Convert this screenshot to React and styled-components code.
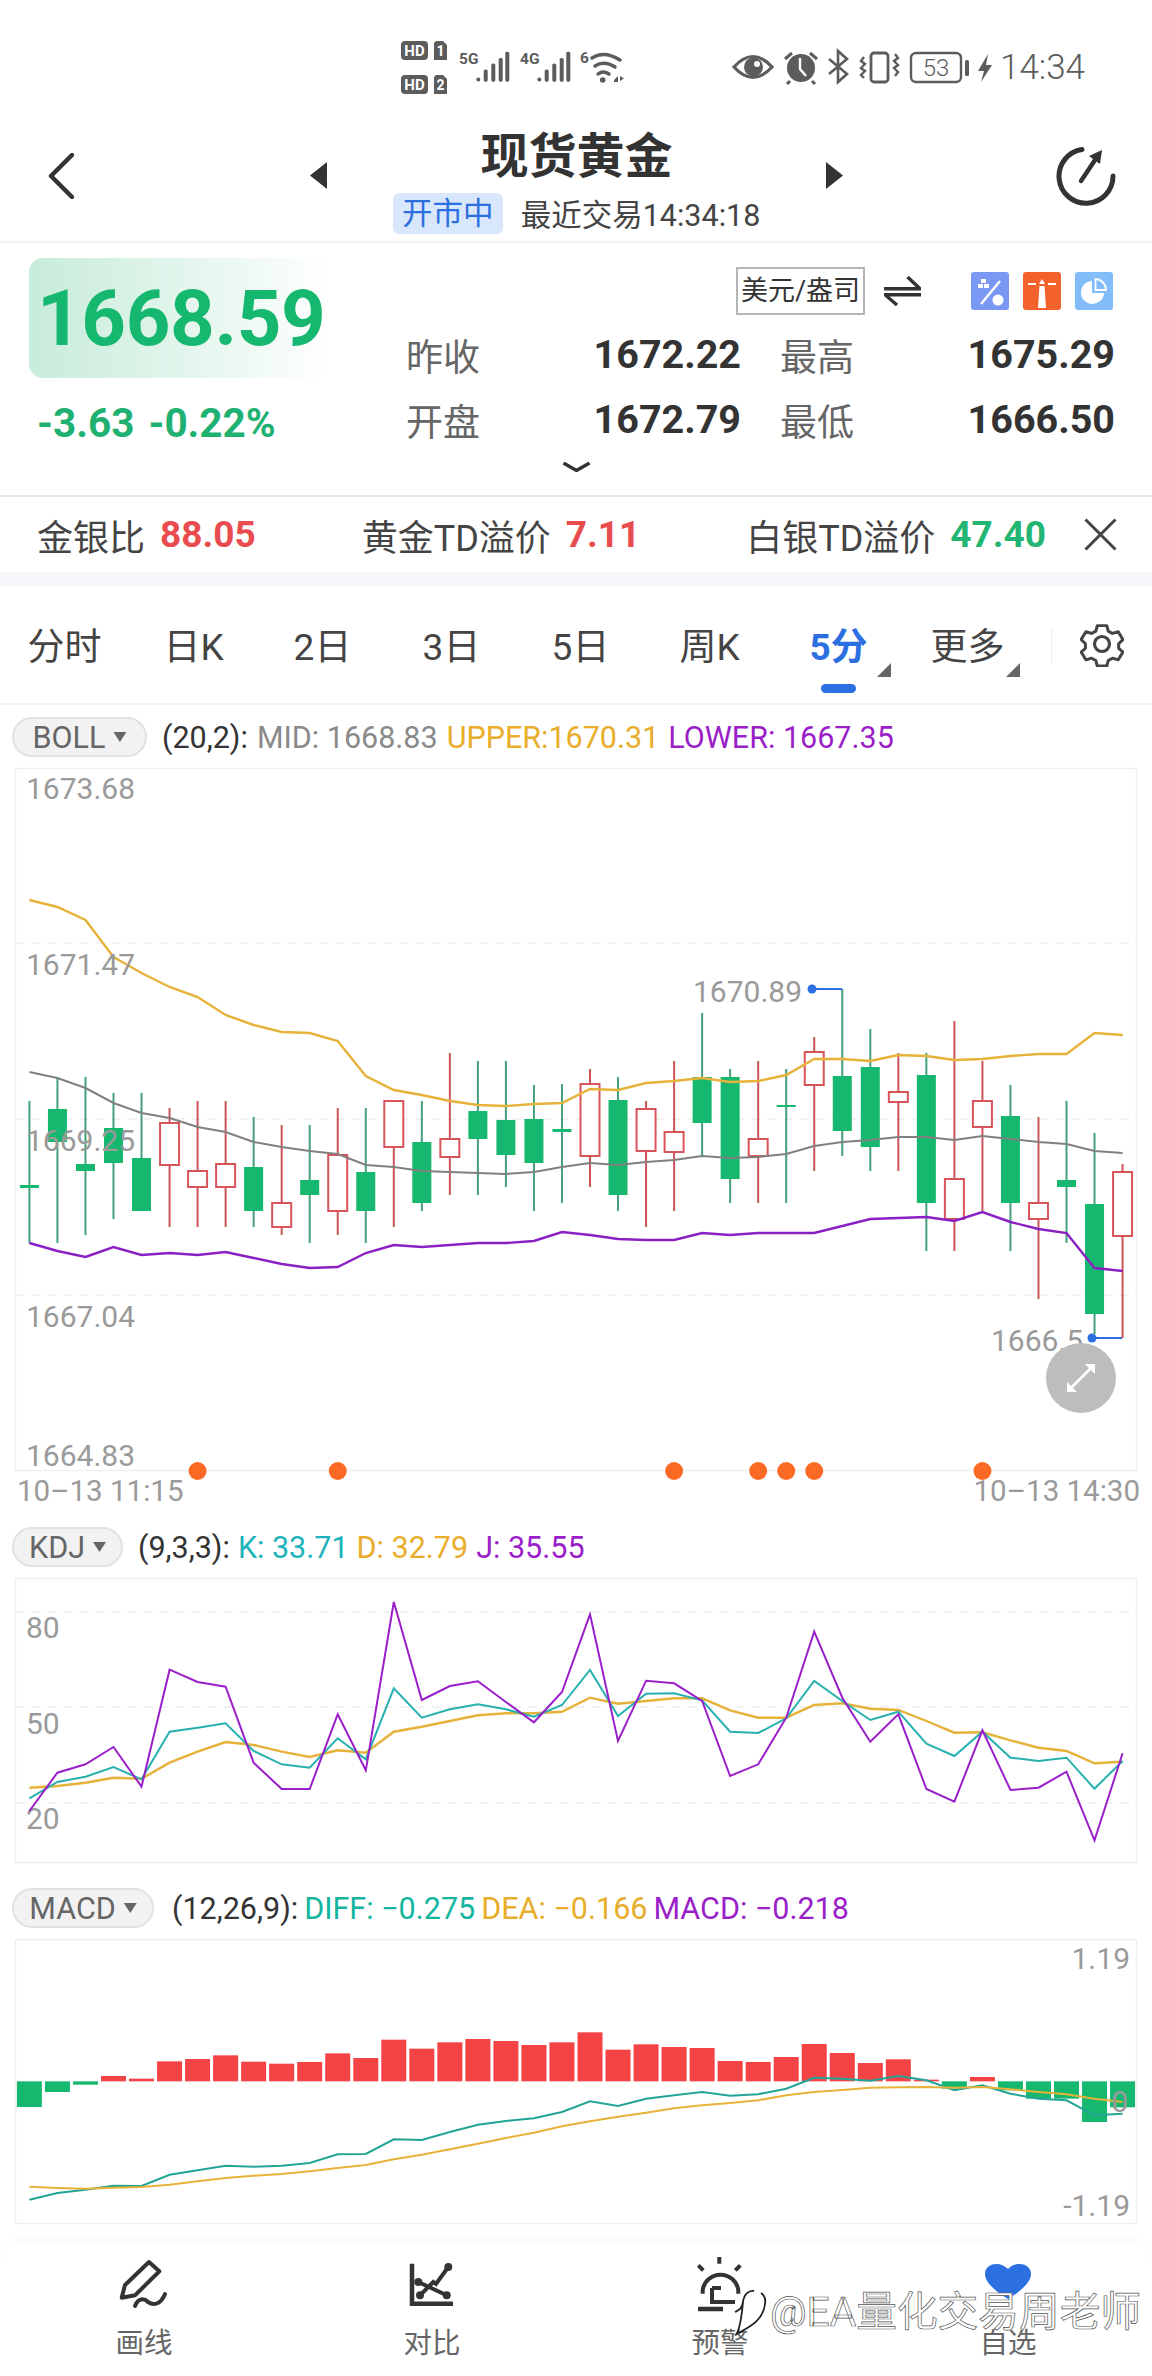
import React from "react";
import styled, { createGlobalStyle } from "styled-components";

const FONT = `Roboto, "Noto Sans CJK SC", sans-serif`;
const GREEN = "#16b86f";
const RED = "#e94c4f";
const BLUE = "#2c6fe0";

const GlobalStyle = createGlobalStyle`
  html, body { margin: 0; padding: 0; background: #fff; }
  body { font-family: ${FONT}; color: #333; }
`;

// candle x in page pixels, all chart data below is read off in page pixels
const cx = (i) => 29.4 + 28.03 * i;

// [up, high, low, bodyTop, bodyBottom]
const candles = [
  [0, 1101, 1243, 1185, 1188], [0, 1077, 1243, 1109, 1142], [0, 1077, 1235, 1164, 1171], [0, 1093, 1219, 1128, 1163],
  [0, 1093, 1211, 1158, 1211], [1, 1108, 1227, 1123, 1165], [1, 1101, 1227, 1171, 1187], [1, 1101, 1227, 1164, 1187],
  [0, 1117, 1227, 1167, 1211], [1, 1125, 1235, 1203, 1227], [0, 1125, 1243, 1180, 1195], [1, 1108, 1235, 1155, 1211],
  [0, 1108, 1243, 1172, 1211], [1, 1101, 1227, 1101, 1147], [0, 1101, 1211, 1142, 1203], [1, 1053, 1195, 1139, 1157],
  [0, 1061, 1195, 1111, 1139], [0, 1061, 1187, 1120, 1155], [0, 1085, 1211, 1119, 1163], [0, 1084, 1203, 1129, 1132],
  [1, 1069, 1187, 1084, 1156], [0, 1077, 1211, 1100, 1195], [1, 1101, 1227, 1109, 1151], [1, 1061, 1211, 1132, 1152],
  [0, 1013, 1156, 1077, 1123], [0, 1069, 1203, 1077, 1179], [1, 1061, 1203, 1139, 1156], [0, 1069, 1203, 1105, 1107],
  [1, 1037, 1171, 1052, 1085], [0, 989, 1156, 1076, 1131], [0, 1029, 1171, 1067, 1147], [1, 1053, 1171, 1092, 1102],
  [0, 1053, 1251, 1075, 1203], [1, 1021, 1251, 1179, 1219], [1, 1061, 1211, 1101, 1127], [0, 1085, 1251, 1116, 1203],
  [1, 1117, 1299, 1203, 1219], [0, 1101, 1243, 1180, 1187], [0, 1133, 1334, 1204, 1314], [1, 1164, 1338, 1172, 1236],
];

const bollUpper = [900, 907, 920, 957, 973, 987, 997, 1015, 1025, 1032, 1033, 1041, 1076, 1090, 1095, 1101, 1105, 1106, 1104, 1103,
  1089, 1090, 1083, 1081, 1078, 1082, 1081, 1075, 1059, 1059, 1061, 1055, 1056, 1060, 1059, 1056, 1054, 1054, 1033, 1035];
const bollMid = [1072, 1078, 1088, 1103, 1113, 1118, 1127, 1132, 1142, 1147, 1151, 1154, 1165, 1167, 1171, 1172, 1173, 1174, 1172, 1167,
  1163, 1165, 1162, 1160, 1156, 1158, 1157, 1154, 1146, 1142, 1140, 1137, 1137, 1140, 1136, 1139, 1142, 1144, 1151, 1153];
const bollLower = [1243, 1251, 1257, 1247, 1255, 1253, 1255, 1252, 1258, 1264, 1268, 1267, 1253, 1245, 1247, 1245, 1243, 1243, 1241, 1232,
  1235, 1239, 1240, 1240, 1233, 1235, 1233, 1233, 1233, 1226, 1219, 1218, 1217, 1221, 1212, 1222, 1229, 1233, 1268, 1271];
const orangeDots = [6, 11, 23, 26, 27, 28, 34];

const kdjJ = [870, 755, 730, 678, 797, 446, 483, 497, 725, 804, 804, 580, 748, 243, 537, 495, 481, 543, 604, 513,
  280, 660, 479, 487, 540, 765, 730, 590, 332, 530, 662, 580, 804, 842, 628, 807, 800, 752, 958, 697];
const kdjK = [832, 783, 767, 738, 775, 632, 620, 607, 690, 730, 740, 652, 715, 502, 590, 565, 550, 565, 587, 552,
  447, 585, 518, 517, 538, 632, 636, 592, 480, 540, 597, 572, 668, 705, 632, 710, 720, 710, 803, 720];
const kdjD = [800, 795, 785, 770, 773, 725, 692, 663, 672, 692, 708, 688, 695, 632, 617, 600, 583, 577, 577, 572,
  530, 548, 540, 532, 532, 568, 590, 590, 552, 547, 563, 567, 600, 635, 634, 658, 680, 690, 727, 722];

// bar tops, everything else hangs on the zero line at 598
const macdBars = [675, 630, 608, 582, 590, 538, 531, 520, 539, 545, 540, 514, 528, 473, 500, 481, 471, 477, 489, 481,
  451, 503, 487, 495, 498, 537, 540, 525, 486, 513, 543, 532, 593, 620, 585, 625, 650, 650, 720, 676];
const macdDiff = [953, 933, 923, 911, 912, 878, 865, 851, 854, 851, 843, 817, 816, 772, 774, 750, 728, 717, 709, 690,
  658, 672, 650, 640, 630, 641, 637, 620, 587, 590, 596, 582, 595, 625, 610, 635, 650, 655, 700, 695];
const macdDea = [914, 918, 920, 917, 915, 908, 898, 888, 881, 876, 868, 858, 849, 832, 818, 802, 785, 768, 752, 733,
  718, 704, 692, 679, 670, 663, 655, 640, 630, 624, 617, 616, 615, 617, 615, 622, 630, 637, 650, 660];

const kdjY = (z) => 1520 + z / 3;
const macdY = (z) => 1880 + z / 3;
const toPoints = (arr, fy = (v) => v) => arr.map((v, i) => `${cx(i).toFixed(1)},${fy(v).toFixed(1)}`).join(" ");

const Page = styled.div`
  width: 1152px;
  height: 2376px;
  overflow: hidden;
  background: #fff;
`;

const StatusBar = styled.div`
  height: 120px;
  box-sizing: border-box;
  padding: 15px 0 0 390px;
  display: flex;
  align-items: center;
  color: #5c5c5c;
`;

const StatusTime = styled.span`
  margin-left: 5px;
  font-size: 35px;
  font-weight: 300;
`;

const StatusRight = styled.svg`
  margin-left: 85px;
`;

const Nav = styled.div`
  height: 123px;
  box-sizing: border-box;
  padding: 7px 35px 0 48px;
  display: flex;
  align-items: flex-start;
  border-bottom: 2px solid #f3f3f3;
`;

const BackIcon = styled.svg`
  margin-top: 26px;
`;

const NavCenter = styled.div`
  margin-left: 236px;
  width: 533px;
  display: grid;
  grid-template-columns: 17px 1fr 17px;
`;

const NavArrow = styled.svg`
  margin-top: 35px;
`;

const NavMid = styled.div`
  display: flex;
  flex-direction: column;
  align-items: center;
`;

const Title = styled.div`
  font-size: 48px;
  line-height: 60px;
  font-weight: 700;
  color: #333;
`;

const SubLine = styled.div`
  margin-top: 4px;
  display: flex;
  align-items: center;
  font-size: 30.5px;
  color: #444;
  gap: 18px;
`;

const OpenTag = styled.span`
  width: 110px;
  height: 41px;
  line-height: 41px;
  text-align: center;
  border-radius: 6px;
  background: #d8e7fb;
  color: ${BLUE};
`;

const RefreshIcon = styled.svg`
  margin-left: auto;
  margin-top: 19px;
`;

const Quote = styled.div`
  display: flex;
  padding: 15px 37px 0 29px;
`;

const QuoteLeft = styled.div`
  width: 301px;
`;

const PriceBox = styled.div`
  height: 120px;
  padding-left: 8px;
  border-radius: 14px 0 0 14px;
  background: linear-gradient(90deg, #c8ecda 0%, #e2f5ec 50%, #ffffff 100%);
  display: flex;
  align-items: center;
  font-size: 78px;
  font-weight: 700;
  color: ${GREEN};
  letter-spacing: -0.4px;
`;

const ChangeLine = styled.div`
  margin: 23px 0 0 8px;
  font-size: 40.5px;
  line-height: 44px;
  font-weight: 700;
  color: #1fb172;
  display: flex;
  gap: 14px;
  white-space: nowrap;
`;

const QuoteRight = styled.div`
  margin-left: 76px;
  width: 709px;
`;

const ToolRow = styled.div`
  margin-top: 9px;
  height: 48px;
  display: flex;
  align-items: center;
  justify-content: flex-end;
`;

const UnitBox = styled.div`
  width: 129px;
  height: 48px;
  box-sizing: border-box;
  border: 2px solid #b5b5b5;
  font-size: 27px;
  line-height: 44px;
  text-align: center;
  color: #333;
  white-space: nowrap;
`;

const SwapIcon = styled.svg`
  margin-left: 19px;
`;

const ToolIcons = styled.div`
  margin-left: 50px;
  margin-right: 2px;
  display: flex;
  gap: 14px;
`;

const Stats = styled.div`
  margin-top: 7px;
  display: grid;
  grid-auto-rows: 65px;
  align-items: center;
  width: 709px;
  grid-template-columns: 75px 260px 39px 75px 260px;
`;

const StatLabel = styled.span`
  font-size: 37px;
  color: #666;
  white-space: nowrap;
`;

const StatValue = styled.span`
  font-size: 39.5px;
  font-weight: 700;
  color: #333;
  text-align: right;
`;

const ExpandRow = styled.div`
  display: flex;
  justify-content: center;
  padding: 10px 0 23px;
  border-bottom: 2px solid #e8e8e8;
  svg { display: block; }
`;

const Ticker = styled.div`
  height: 75px;
  box-sizing: border-box;
  padding: 0 35px 0 37px;
  display: flex;
  align-items: center;
`;

const TickerGroup = styled.div`
  display: flex;
  align-items: center;
  gap: 106px;
`;

const TickerItem = styled.div`
  display: flex;
  align-items: center;
  gap: 15px;
  font-size: 36px;
  color: #444;
  white-space: nowrap;
`;

const TickerValue = styled.span`
  font-size: 37px;
  font-weight: 700;
  color: ${(p) => p.$color};
`;

const CloseIcon = styled.svg`
  margin-left: auto;
  flex-shrink: 0;
`;

const Band = styled.div`
  height: 14px;
  background: #f5f6fa;
`;

const Tabs = styled.div`
  height: 119px;
  box-sizing: border-box;
  border-bottom: 2px solid #f3f3f3;
  display: flex;
  align-items: stretch;
`;

const Tab = styled.div`
  position: relative;
  width: 129px;
  box-sizing: border-box;
  padding-top: 34px;
  text-align: center;
  font-size: 37px;
  line-height: 56px;
  font-weight: ${(p) => (p.$active ? 700 : 400)};
  color: ${(p) => (p.$active ? BLUE : "#444")};
  &::after {
    display: ${(p) => (p.$active ? "block" : "none")};
    content: "";
    position: absolute;
    left: 47px;
    top: 98px;
    width: 35px;
    height: 9px;
    border-radius: 5px;
    background: ${BLUE};
  }
`;

const Corner = styled.span`
  position: absolute;
  left: 103px;
  top: 77px;
  width: 14px;
  height: 14px;
  background: #666;
  clip-path: polygon(100% 0, 100% 100%, 0 100%);
`;

const TabDivider = styled.div`
  margin: 41px 0 0 19px;
  width: 1px;
  height: 36px;
  background: #eee;
`;

const GearWrap = styled.div`
  margin: 35px 0 0 28px;
  color: #444;
`;

const IndicatorRow = styled.div`
  margin-top: ${(p) => p.$top}px;
  padding: 0 0 11px 12px;
  display: flex;
  align-items: center;
  font-size: 30.5px;
  white-space: nowrap;
`;

const Pill = styled.div`
  width: ${(p) => p.$w}px;
  height: 40px;
  box-sizing: border-box;
  border: 2px solid #e2e2e2;
  border-radius: 20px;
  background: #f2f2f2;
  color: #666;
  display: flex;
  align-items: center;
  justify-content: center;
  gap: 8px;
  font-size: 30.5px;
`;

const PillCaret = styled.span`
  width: 13px;
  height: 10px;
  background: #666;
  clip-path: polygon(0 0, 100% 0, 50% 100%);
`;

const Params = styled.div`
  margin-left: ${(p) => p.$gap}px;
  display: flex;
  gap: ${(p) => p.$spread}px;
`;

const Tone = styled.span`
  color: ${(p) => p.$c};
`;

const Panel = styled.div`
  margin: 0 15px;
  width: 1122px;
  height: ${(p) => p.$h}px;
  box-sizing: border-box;
  svg { display: block; overflow: visible; }
`;

const AxisText = styled.text`
  font-family: ${FONT};
  font-size: 30px;
  fill: #9a9a9a;
`;

const XLabels = styled.div`
  height: 39px;
  padding: 0 12px 0 17px;
  display: flex;
  align-items: center;
  justify-content: space-between;
  font-size: 29.5px;
  color: #9a9a9a;
`;

const Footer = styled.div`
  position: relative;
  margin-top: 18px;
  height: 136px;
  box-sizing: border-box;
  padding-top: 12px;
  border-radius: 24px 24px 0 0;
  box-shadow: 0 -2px 10px rgba(0, 0, 0, 0.035);
  display: grid;
  grid-template-columns: repeat(4, 288px);
`;

const FootItem = styled.div`
  display: flex;
  flex-direction: column;
  align-items: center;
  font-size: 28.5px;
  line-height: 32px;
  color: #666;
  svg { display: block; margin-bottom: 14px; }
`;

const Watermark = styled.div`
  position: absolute;
  left: 733px;
  top: 46px;
  display: flex;
  align-items: flex-start;
  gap: 3px;
  font-size: 40.7px;
  line-height: 48px;
  color: #fff;
  -webkit-text-stroke: 0.7px #555;
  white-space: nowrap;
`;

const Signal = ({ x }) => (
  <g fill="#5c5c5c">
    <circle cx={x + 2} cy={49.6} r={2} />
    {[[7.4, 39.5], [15, 33.5], [22.4, 28], [29, 21.7]].map(([dx, top]) => (
      <rect key={dx} x={x + dx} y={top} width={4} height={51.7 - top} rx={1.6} />
    ))}
  </g>
);

const HdBadge = ({ y, n }) => (
  <g>
    <rect x="11" y={y} width="27" height="19" rx="4" fill="#5c5c5c" />
    <text x="24.5" y={y + 15} textAnchor="middle" fontSize="15" fontWeight="700" fill="#fff" fontFamily={FONT}>HD</text>
    <path d={`M46 ${y}h7l4 4v15h-13v-17z`} fill="#5c5c5c" />
    <text x="50.5" y={y + 15} textAnchor="middle" fontSize="14" fontWeight="700" fill="#fff" fontFamily={FONT}>{n}</text>
  </g>
);

const StatusLeft = () => (
  <svg width="250" height="75" viewBox="0 0 250 75">
    <HdBadge y={11} n="1" />
    <HdBadge y={45} n="2" />
    <text x="69" y="34" fontSize="15.500" fontWeight="700" fill="#5c5c5c" fontFamily={FONT}>5G</text>
    <Signal x={86.3} />
    <text x="130" y="34" fontSize="15.500" fontWeight="700" fill="#5c5c5c" fontFamily={FONT}>4G</text>
    <Signal x={147.3} />
    <text x="190" y="33" fontSize="15.500" fontWeight="700" fill="#5c5c5c" fontFamily={FONT}>6</text>
    <g fill="none" stroke="#5c5c5c" strokeWidth="3.4" strokeLinecap="round">
      <path d="M202 28 Q214 20 230 30" />
      <path d="M205 36 Q214 30 225 37" />
      <path d="M208 44 Q213 40 219 44" />
    </g>
    <circle cx="212.7" cy="50" r="2.8" fill="#5c5c5c" />
    <path d="M224 50l4-4v6h-4zM230 46l4 2.5-4 2.5z" fill="#5c5c5c" />
  </svg>
);

const StatusIcons = () => (
  <StatusRight width="270" height="55" viewBox="0 0 270 55">
    <path d="M9 27 Q28 6 47 27 Q28 48 9 27Z" fill="none" stroke="#5c5c5c" strokeWidth="3.2" />
    <circle cx="28.5" cy="27" r="9.5" fill="#5c5c5c" />
    <circle cx="32" cy="24" r="3" fill="#fff" />
    <circle cx="76" cy="28" r="14" fill="#5c5c5c" />
    <path d="M75 18v11l6 7" fill="none" stroke="#fff" strokeWidth="2.4" />
    <path d="M60 19l7-6M85 13l7 6M65 41l-3 3M87 41l3 3" stroke="#5c5c5c" strokeWidth="3" />
    <path d="M104 19 L122 34 L113 42 V11 L122 19 L104 34" fill="none" stroke="#5c5c5c" strokeWidth="2.6" />
    <rect x="146" y="13" width="17" height="29" rx="3" fill="none" stroke="#5c5c5c" strokeWidth="2.8" />
    <path d="M139 17 l-3 4 4 3 -4 4 4 3 -4 4 3 3M170 14 l3 4 -4 3 4 4 -4 3 4 4 -3 4" fill="none" stroke="#5c5c5c" strokeWidth="2.4" />
    <rect x="186" y="13" width="50" height="29" rx="5" fill="none" stroke="#5c5c5c" strokeWidth="2.4" />
    <text x="211" y="36" textAnchor="middle" fontSize="24" fontWeight="300" fill="#5c5c5c" fontFamily={FONT}>53</text>
    <rect x="240" y="20" width="4" height="16" rx="1.5" fill="#5c5c5c" />
    <path d="M263 14 L253 31 H259 L256 42 L267 25 H261 Z" fill="#5c5c5c" />
  </StatusRight>
);

const ToolBlue = () => (
  <svg width="38" height="38" viewBox="0 0 38 38">
    <rect width="38" height="38" rx="3" fill="#7b97f4" />
    <path d="M10 32 L29 9" stroke="#fff" strokeWidth="2.4" />
    <circle cx="27" cy="28" r="5.5" fill="#fff" />
    <path d="M10 7h5v4h-5zM7 12h5v4h-5zM13 12h5v4h-5z" fill="#fff" />
  </svg>
);

const ToolOrange = () => (
  <svg width="38" height="38" viewBox="0 0 38 38">
    <rect width="38" height="38" rx="3" fill="#f2622a" />
    <path d="M15 36 L16.5 14 H21.5 L23 36Z M16 12 L19 7 L22 12Z" fill="#fff" />
    <path d="M5 12h8M25 12h8" stroke="#fff" strokeWidth="2" />
  </svg>
);

const ToolPie = () => (
  <svg width="38" height="38" viewBox="0 0 38 38">
    <rect width="38" height="38" rx="3" fill="#82bdf9" />
    <path d="M17 9 A11.5 11.5 0 1 0 29 21 H17 Z" fill="#fff" />
    <path d="M20.5 7 A11 11 0 0 1 31 18 H20.5 Z" fill="none" stroke="#fff" strokeWidth="1.8" />
  </svg>
);

const Gear = () => (
  <svg width="44" height="46" viewBox="0 0 44 46" fill="none" stroke="currentColor" strokeWidth="3.2" strokeLinejoin="round">
    <path d="M17 3h10l1.5 6 4.5 2.5 6-1.800 5 8.500-4.500 4.500v0 5l4.500 4-5 8.500-6-1.800-4.500 2.600-1.500 6h-10l-1.500-6-4.500-2.600-6 1.800-5-8.500 4.500-4v-5l-4.500-4.500 5-8.500 6 1.800 4.500-2.500z" transform="translate(0 0) scale(0.95 0.92) translate(1.200 2)" />
    <circle cx="22" cy="23" r="7.500" />
  </svg>
);

const Candle = ({ i, data }) => {
  const [up, hi, lo, top, bot] = data;
  const x = cx(i);
  if (up) {
    return (
      <g>
        <line x1={x} x2={x} y1={hi} y2={lo} stroke="#cc555c" strokeWidth="2" />
        <rect x={x - 9.5} y={top} width={19} height={bot - top} fill="#fff" stroke="#d9545a" strokeWidth="2" />
      </g>
    );
  }
  return (
    <g>
      <line x1={x} x2={x} y1={hi} y2={lo} stroke="#43a07c" strokeWidth="2" />
      <rect x={x - 9.5} y={top} width={19} height={bot - top} fill={GREEN} />
    </g>
  );
};

const PanelFrame = ({ x = 15, y, h }) => (
  <rect x={x + 0.5} y={y + 0.5} width={1121} height={h - 1} fill="none" stroke="#f0f0f0" strokeWidth="1.5" />
);

const GridLine = ({ y }) => (
  <line x1="16" x2="1136" y1={y} y2={y} stroke="#eeeeee" strokeWidth="1.5" strokeDasharray="9 7" />
);

const BollChart = () => (
  <svg width="1122" height="703" viewBox="15 768 1122 703">
    <PanelFrame y={768} h={703} />
    {[943, 1119, 1295].map((y) => <GridLine key={y} y={y} />)}
    {candles.map((c, i) => <Candle key={i} i={i} data={c} />)}
    <polyline points={toPoints(bollUpper)} fill="none" stroke="#e6b23a" strokeWidth="2.4" />
    <polyline points={toPoints(bollMid)} fill="none" stroke="#808080" strokeWidth="2" />
    <polyline points={toPoints(bollLower)} fill="none" stroke="#8a1fc4" strokeWidth="2.4" />
    <AxisText x="26" y="799">1673.68</AxisText>
    <AxisText x="26" y="975">1671.47</AxisText>
    <AxisText x="26" y="1151">1669.25</AxisText>
    <AxisText x="26" y="1327">1667.04</AxisText>
    <AxisText x="26" y="1466">1664.83</AxisText>
    <AxisText x="693" y="1002">1670.89</AxisText>
    <path d="M812 989 H842" stroke={BLUE} strokeWidth="2" fill="none" />
    <circle cx="812" cy="989" r="4.500" fill={BLUE} />
    <AxisText x="991" y="1351">1666.5</AxisText>
    <path d="M1092 1338 H1122" stroke={BLUE} strokeWidth="2" fill="none" />
    <circle cx="1092" cy="1338" r="4.500" fill={BLUE} />
    {orangeDots.map((i) => <circle key={i} cx={cx(i)} cy="1471" r="9" fill="#fb6a25" />)}
    <circle cx="1081" cy="1378" r="35" fill="#bdbdbd" />
    <path d="M1069 1390 L1093 1366" stroke="#fff" strokeWidth="2.600" />
    <path d="M1085 1364 H1095 V1374 Z M1067 1382 V1392 H1077 Z" fill="#fff" />
  </svg>
);

const KdjChart = () => (
  <svg width="1122" height="285" viewBox="15 1577 1122 285">
    <PanelFrame y={1577} h={285} />
    {[1611, 1706, 1802].map((y) => <GridLine key={y} y={y} />)}
    <AxisText x="26" y="1637">80</AxisText>
    <AxisText x="26" y="1733">50</AxisText>
    <AxisText x="26" y="1828">20</AxisText>
    <polyline points={toPoints(kdjD, kdjY)} fill="none" stroke="#e6b23a" strokeWidth="2.400" />
    <polyline points={toPoints(kdjK, kdjY)} fill="none" stroke="#28b0b0" strokeWidth="2" />
    <polyline points={toPoints(kdjJ, kdjY)} fill="none" stroke="#9a1fc9" strokeWidth="2" />
  </svg>
);

const MacdChart = () => (
  <svg width="1122" height="285" viewBox="15 1937 1122 285">
    <PanelFrame y={1937} h={285} />
    {macdBars.map((z, i) => {
      const up = z < 598;
      const a = macdY(Math.min(z, 598));
      const b = macdY(Math.max(z, 598));
      return <rect key={i} x={cx(i) - 12.500} y={a} width={25} height={b - a} fill={up ? "#f44345" : GREEN} />;
    })}
    <polyline points={toPoints(macdDiff, macdY)} fill="none" stroke="#22a596" strokeWidth="2" />
    <polyline points={toPoints(macdDea, macdY)} fill="none" stroke="#e6b23a" strokeWidth="2" />
    <AxisText x="1130" y="1967" textAnchor="end">1.19</AxisText>
    <AxisText x="1128" y="2110" textAnchor="end">0</AxisText>
    <AxisText x="1130" y="2214" textAnchor="end">-1.19</AxisText>
  </svg>
);

const statRows = [
  ["昨收", "1672.22", "最高", "1675.29"],
  ["开盘", "1672.79", "最低", "1666.50"],
];

const tabs = ["分时", "日K", "2日", "3日", "5日", "周K", "5分", "更多"];

const App = () => (
  <Page>
    <GlobalStyle />
    <StatusBar>
      <StatusLeft />
      <StatusIcons />
      <StatusTime>14:34</StatusTime>
    </StatusBar>

    <Nav>
      <BackIcon width="26" height="46" viewBox="0 0 26 46">
        <path d="M24 2 L3 23 L24 44" fill="none" stroke="#333" strokeWidth="4.500" strokeLinecap="round" strokeLinejoin="round" />
      </BackIcon>
      <NavCenter>
        <NavArrow width="17" height="27" viewBox="0 0 17 27"><path d="M17 0 V27 L0 13.500Z" fill="#333" /></NavArrow>
        <NavMid>
          <Title>现货黄金</Title>
          <SubLine>
            <OpenTag>开市中</OpenTag>
            <span>最近交易14:34:18</span>
          </SubLine>
        </NavMid>
        <NavArrow width="17" height="27" viewBox="0 0 17 27"><path d="M0 0 V27 L17 13.500Z" fill="#333" /></NavArrow>
      </NavCenter>
      <RefreshIcon width="61" height="60" viewBox="0 0 61 60">
        <path d="M26 3.500 A27 27 0 1 0 57 30" fill="none" stroke="#333" strokeWidth="5" strokeLinecap="round" />
        <path d="M25 35 L39 14" stroke="#333" strokeWidth="4.500" strokeLinecap="round" />
        <path d="M46 4 L33 10 L44 18Z" fill="#333" />
      </RefreshIcon>
    </Nav>

    <Quote>
      <QuoteLeft>
        <PriceBox>1668.59</PriceBox>
        <ChangeLine>
          <span>-3.63</span>
          <span>-0.22%</span>
        </ChangeLine>
      </QuoteLeft>
      <QuoteRight>
        <ToolRow>
          <UnitBox>美元/盎司</UnitBox>
          <SwapIcon width="37" height="30" viewBox="0 0 37 30">
            <path d="M0 12.700 H36 L23.500 1 M37 18.700 H1 L13 29" fill="none" stroke="#333" strokeWidth="3.400" />
          </SwapIcon>
          <ToolIcons>
            <ToolBlue />
            <ToolOrange />
            <ToolPie />
          </ToolIcons>
        </ToolRow>
        <Stats>
          {statRows.map(([a, b, c, d]) => (
            <React.Fragment key={a}>
              <StatLabel>{a}</StatLabel>
              <StatValue>{b}</StatValue>
              <span />
              <StatLabel>{c}</StatLabel>
              <StatValue>{d}</StatValue>
            </React.Fragment>
          ))}
        </Stats>
      </QuoteRight>
    </Quote>
    <ExpandRow>
      <svg width="29" height="10" viewBox="0 0 29 10">
        <path d="M1.500 1 L14.500 8.500 L27.500 1" fill="none" stroke="#333" strokeWidth="3.400" />
      </svg>
    </ExpandRow>

    <Ticker>
      <TickerGroup>
        <TickerItem>金银比<TickerValue $color={RED}>88.05</TickerValue></TickerItem>
        <TickerItem>黄金TD溢价<TickerValue $color={RED}>7.11</TickerValue></TickerItem>
        <TickerItem>白银TD溢价<TickerValue $color="#22b573">47.40</TickerValue></TickerItem>
      </TickerGroup>
      <CloseIcon width="33" height="33" viewBox="0 0 33 33">
        <path d="M1.500 1.500 L31.500 31.500 M31.500 1.500 L1.500 31.500" stroke="#444" strokeWidth="3" />
      </CloseIcon>
    </Ticker>
    <Band />

    <Tabs>
      {tabs.map((t) => (
        <Tab key={t} $active={t === "5分"}>
          {t}
          {(t === "5分" || t === "更多") && <Corner />}
        </Tab>
      ))}
      <TabDivider />
      <GearWrap><Gear /></GearWrap>
    </Tabs>

    <IndicatorRow $top={12}>
      <Pill $w={135}>BOLL<PillCaret /></Pill>
      <Params $gap={15} $spread={9}>
        <Tone $c="#333">(20,2):</Tone>
        <Tone $c="#8a8a8a">MID: 1668.83</Tone>
        <Tone $c="#e8ad2a">UPPER:1670.31</Tone>
        <Tone $c="#9a1fc9">LOWER: 1667.35</Tone>
      </Params>
    </IndicatorRow>
    <Panel $h={703}><BollChart /></Panel>
    <XLabels>
      <span>10–13 11:15</span>
      <span>10–13 14:30</span>
    </XLabels>

    <IndicatorRow $top={17}>
      <Pill $w={111}>KDJ<PillCaret /></Pill>
      <Params $gap={15} $spread={8}>
        <Tone $c="#333">(9,3,3):</Tone>
        <Tone $c="#1cb3bb">K: 33.71</Tone>
        <Tone $c="#e8ad2a">D: 32.79</Tone>
        <Tone $c="#9a1fc9">J: 35.55</Tone>
      </Params>
    </IndicatorRow>
    <Panel $h={285}><KdjChart /></Panel>

    <IndicatorRow $top={25}>
      <Pill $w={142}>MACD<PillCaret /></Pill>
      <Params $gap={18} $spread={6}>
        <Tone $c="#333">(12,26,9):</Tone>
        <Tone $c="#14b5a0">DIFF: −0.275</Tone>
        <Tone $c="#e8ad2a">DEA: −0.166</Tone>
        <Tone $c="#9a1fc9">MACD: −0.218</Tone>
      </Params>
    </IndicatorRow>
    <Panel $h={285}><MacdChart /></Panel>

    <Footer>
      <FootItem>
        <svg width="60" height="60" viewBox="0 0 60 60" fill="none" stroke="#333" strokeWidth="4">
          <path d="M7.700 43.700 L11 31 L35 8 L45.300 17.300 L21 41.300Z" strokeLinejoin="round" />
          <path d="M21 52 C24 44 30 44 34 48 C40 52 47 50 51 40" strokeLinecap="round" />
        </svg>
        画线
      </FootItem>
      <FootItem>
        <svg width="60" height="60" viewBox="0 0 60 60" fill="none" stroke="#333" strokeWidth="4">
          <path d="M10 9.700 V49.700 H51" strokeWidth="4.500" />
          <path d="M16.300 28 L44.700 41.300 M18 41.300 L31.300 28 L34 30 L46.300 13" />
          <g fill="#333" stroke="none">
            <circle cx="16.300" cy="28" r="4" />
            <circle cx="44.700" cy="41.300" r="4" />
            <circle cx="18" cy="41.300" r="4" />
            <circle cx="46.300" cy="13" r="4" />
          </g>
        </svg>
        对比
      </FootItem>
      <FootItem>
        <svg width="60" height="60" viewBox="0 0 60 60" fill="none" stroke="#333" strokeWidth="4">
          <path d="M29.300 3 V9.700 M8.300 11.300 L13.300 16.300 M50.300 11.300 L45.300 16.300" />
          <path d="M12.700 39.700 V36 A18 18 0 0 1 48.300 36 V39.700" />
          <path d="M22 34 V48 H45 M22 34 H31" />
          <path d="M8 55 H33" strokeWidth="4.500" />
        </svg>
        预警
      </FootItem>
      <FootItem>
        <svg width="60" height="60" viewBox="0 0 60 60">
          <path d="M30 45 C22 40 7 30 7 20 C7 13 13 10 18.500 10 C23 10 27 12 30 15 C33 12 37 10 41.500 10 C47 10 53 13 53 20 C53 30 38 40 30 45Z" fill={BLUE} />
        </svg>
        自选
      </FootItem>
      <Watermark>
        <svg width="34" height="48" viewBox="0 0 34 48" fill="none" stroke="#222" strokeWidth="1.800">
          <path d="M2 24 C6 22 9 21 10 14 C11 6 16 2 21 3 M10 14 C9 26 8 36 4 46 C14 40 30 34 32 16 C33 10 31 7 28 5" />
        </svg>
        <span>@EA量化交易周老师</span>
      </Watermark>
    </Footer>
  </Page>
);

export default App;
